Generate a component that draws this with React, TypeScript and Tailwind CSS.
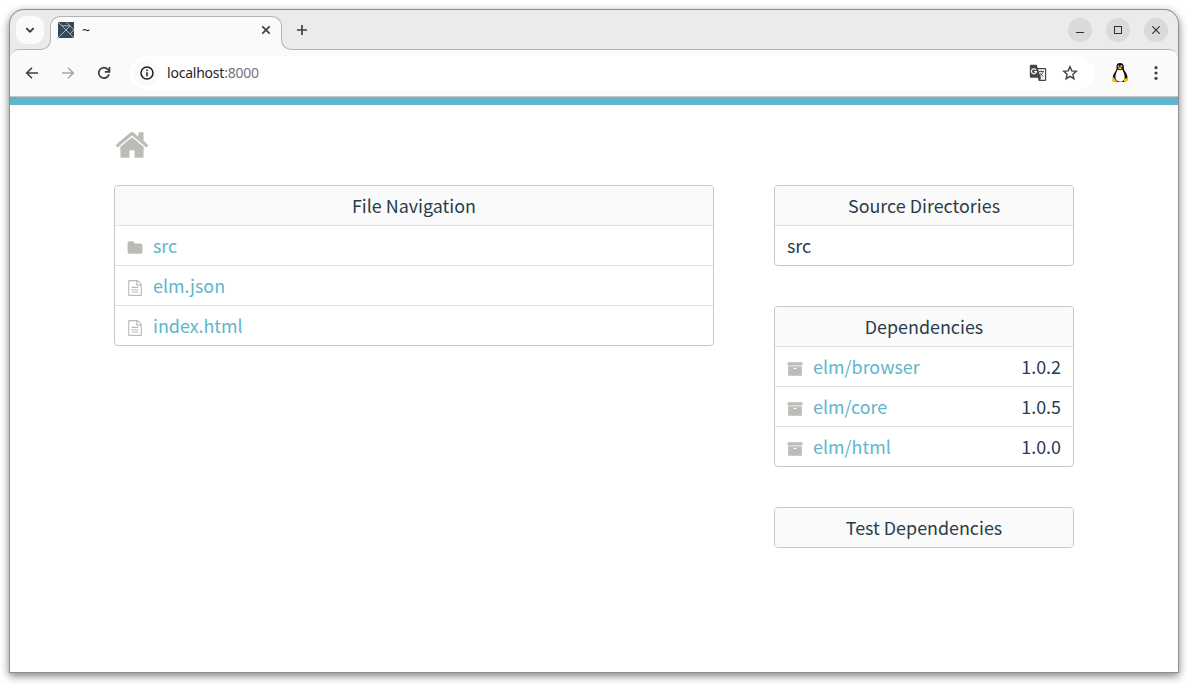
import React from 'react';

interface FileEntry {
  name: string;
  kind: 'folder' | 'file';
}

interface Dependency {
  name: string;
  version: string;
}

const files: FileEntry[] = [
  { name: 'src', kind: 'folder' },
  { name: 'elm.json', kind: 'file' },
  { name: 'index.html', kind: 'file' },
];

const dependencies: Dependency[] = [
  { name: 'elm/browser', version: '1.0.2' },
  { name: 'elm/core', version: '1.0.5' },
  { name: 'elm/html', version: '1.0.0' },
];

const iconPaths = {
  home: 'M1472 992v480q0 26-19 45t-45 19h-384v-384h-256v384h-384q-26 0-45-19t-19-45v-480q0-1 .5-3t.5-3l575-474 575 474q1 2 1 6zm223-69l-62 74q-8 9-21 11h-3q-13 0-21-7l-692-577-692 577q-12 8-24 7-13-2-21-11l-62-74q-8-10-7-23.5t11-21.5l719-599q32-26 76-26t76 26l244 204v-195q0-14 9-23t23-9h192q14 0 23 9t9 23v408l219 182q10 8 11 21.5t-7 23.5z',
  folder: 'M1728 608v704q0 92-66 158t-158 66h-1216q-92 0-158-66t-66-158v-960q0-92 66-158t158-66h320q92 0 158 66t66 158v32h672q92 0 158 66t66 158z',
  file: 'M1596 380q28 28 48 76t20 88v1152q0 40-28 68t-68 28h-1344q-40 0-68-28t-28-68v-1600q0-40 28-68t68-28h896q40 0 88 20t76 48zm-444-244v376h376q-10-29-22-41l-313-313q-12-12-41-22zm384 1528v-1024h-416q-40 0-68-28t-28-68v-416h-768v1536h1280zm-1024-864q0-14 9-23t23-9h704q14 0 23 9t9 23v64q0 14-9 23t-23 9h-704q-14 0-23-9t-9-23v-64zm736 224q14 0 23 9t9 23v64q0 14-9 23t-23 9h-704q-14 0-23-9t-9-23v-64q0-14 9-23t23-9h704zm0 256q14 0 23 9t9 23v64q0 14-9 23t-23 9h-704q-14 0-23-9t-9-23v-64q0-14 9-23t23-9h704z',
  archive: 'M1088 832q0-26-19-45t-45-19h-256q-26 0-45 19t-19 45 19 45 45 19h256q26 0 45-19t19-45zm576-192v960q0 26-19 45t-45 19h-1408q-26 0-45-19t-19-45v-960q0-26 19-45t45-19h1408q26 0 45 19t19 45zm64-448v256q0 26-19 45t-45 19h-1536q-26 0-45-19t-19-45v-256q0-26 19-45t45-19h1536q26 0 45 19t19 45z',
};

const Icon: React.FC<{ name: keyof typeof iconPaths; className: string }> = ({ name, className }) => (
  <svg viewBox="0 0 1792 1792" className={`fill-[#babdb6] ${className}`}>
    <path d={iconPaths[name]} />
  </svg>
);

const ElmLogo = () => (
  <svg viewBox="0 0 16 16" className="h-4 w-4">
    <rect width="16" height="16" fill="#34495e" />
    <path d="M0 0L16 16M0 16L12 4M3.800 3.800H12M8.200 0L16 7.800L12.200 11.800" fill="none" stroke="#c9cfd4" strokeWidth="0.8" />
  </svg>
);

const Penguin = () => (
  <svg viewBox="0 0 18 20" className="h-5 w-[18px]">
    <path d="M9 0C6.400 0 5.400 1.600 5.500 4c.1 2.300-.3 3.200-1.500 5C2.600 11 1.600 13 1.800 15.500L5 19h8.500l3-3.500c.3-2.500-.9-5-2.400-7C12.700 6.700 12.900 5.500 12.800 3.600 12.700 1.200 11.500 0 9 0z" fill="#111" />
    <path d="M6.600 6.600c1.200 1 3.200.9 4.500-.2 1.500 2.600 2.700 5 2.500 8.100-.2 2.500-1.500 4.200-4.400 4.200-2.800 0-4.600-1.800-4.800-4.400C4.200 11.300 5.800 9.100 6.600 6.600z" fill="#fff" />
    <circle cx="7.500" cy="3.200" r="1" fill="#aaa" />
    <circle cx="10.300" cy="3.200" r="1.100" fill="#aaa" />
    <path d="M6.500 5.100L8.800 3.900l2.700 1.200L9 6.800z" fill="#f5b301" />
    <path d="M2.400 14l3.700 4.400c-.4 1.300-2 1.100-5.100.1.500-1.300.4-3.200 1.400-4.500zM13.200 15c1.200 1.100 2.300.6 3-.4.2 1 1 1.500 1.400 2.200-1 1-2.300 2.200-3.800 2.400-1.200-.7-.9-2.700-.6-4.200z" fill="#f7b500" />
  </svg>
);

const TranslateIcon = () => (
  <svg viewBox="0 0 18 18" className="h-[18px] w-[18px]">
    <path d="M2 .8h5.700l1 3.200H16a1.200 1.200 0 0 1 1.200 1.200v10.600A1.200 1.200 0 0 1 16 17H9.800l-1-3.200H2A1.200 1.200 0 0 1 .8 12.600V2A1.200 1.200 0 0 1 2 .8z" fill="#474747" />
    <path d="M9.100 5.200H16v10.600h-4.800l1-2h-.4z" fill="#fafafa" />
    <path d="M7 5.900A2.500 2.500 0 1 0 7.400 7.700H5.200" fill="none" stroke="#fafafa" strokeWidth="1.200" />
    <path d="M10 7.500h5M12.500 6.500v1M14 7.500c-.5 2-1.700 3.400-3 4.500M11 8.800c.8 1.500 2 2.700 3.600 3.900" fill="none" stroke="#474747" strokeWidth="0.900" />
  </svg>
);

const TabStrip = () => (
  <div className="flex h-[39px] items-start pl-1.5">
    <div className="mt-1.5 flex h-7 w-7 items-center justify-center rounded-[10px] bg-[#fbfbfb]">
      <svg viewBox="0 0 10 10" className="h-2.5 w-2.5" fill="none" stroke="#303030" strokeWidth="1.7">
        <path d="M1.300 3.200L5 6.900l3.700-3.700" />
      </svg>
    </div>
    <div className="relative z-10 ml-1.5 mt-1.5 flex h-[34px] w-[232px] items-center rounded-t-[10px] border border-b-0 border-[#b3b3b3] bg-[#fafafa] pl-[7px] pr-2.5">
      {/* feet that flare out into the toolbar */}
      <span className="absolute -left-[11px] bottom-0 h-[11px] w-[11px] bg-[#fafafa] [clip-path:inset(0_0_0_1px)]">
        <span className="block h-full w-full rounded-br-[10px] border-b border-r border-[#b3b3b3] bg-[#ebebeb]" />
      </span>
      <span className="absolute -right-[11px] bottom-0 h-[11px] w-[11px] bg-[#fafafa]">
        <span className="block h-full w-full rounded-bl-[10px] border-b border-l border-[#b3b3b3] bg-[#ebebeb]" />
      </span>
      <div className="-mt-[7px] flex w-full items-center">
        <ElmLogo />
        <span className="ml-2 font-['Noto_Sans',sans-serif] text-[14px] leading-4 text-[#1f1f1f]">~</span>
        <svg viewBox="0 0 10 10" className="ml-auto h-2.5 w-2.5" stroke="#404040" strokeWidth="1.700">
          <path d="M1.300 1.300l7.400 7.400M8.700 1.300L1.300 8.700" />
        </svg>
      </div>
    </div>
    <svg viewBox="0 0 10 10" className="ml-[15px] mt-[15px] h-2.5 w-2.5" stroke="#404040" strokeWidth="1.700">
      <path d="M5 0v10M0 5h10" />
    </svg>
    <div className="ml-auto mr-2.5 mt-2 flex gap-3.5">
      <span className="flex h-6 w-6 items-center justify-center rounded-full bg-[#dadada]">
        <svg viewBox="0 0 8 8" className="h-2 w-2" stroke="#303030"><path d="M0 6.500h8" /></svg>
      </span>
      <span className="flex h-6 w-6 items-center justify-center rounded-full bg-[#dadada]">
        <span className="h-2 w-2 border border-[#303030]" />
      </span>
      <span className="flex h-6 w-6 items-center justify-center rounded-full bg-[#dadada]">
        <svg viewBox="0 0 8 8" className="h-2 w-2" stroke="#303030" strokeWidth="1.200"><path d="M.3.3l7.400 7.400M7.700.3L.3 7.700" /></svg>
      </span>
    </div>
  </div>
);

const Toolbar = () => (
  <div className="flex h-12 items-center rounded-t-[9px] border-b border-t border-b-[#c6c6c6] border-t-[#b3b3b3] bg-[#fafafa] pl-3.5 pr-3.5">
    <svg viewBox="0 0 16 16" className="h-4 w-4" fill="none" stroke="#404040" strokeWidth="1.600">
      <path d="M14 8H3M8 2.700L2.700 8 8 13.300" />
    </svg>
    <svg viewBox="0 0 16 16" className="ml-5 h-4 w-4" fill="none" stroke="#a6a6a6" strokeWidth="1.600">
      <path d="M2 8h11M8 2.700L13.300 8 8 13.300" />
    </svg>
    <svg viewBox="0 0 16 16" className="ml-5 h-4 w-4" fill="none" stroke="#404040" strokeWidth="1.700">
      <path d="M13 9.200A5.200 5.200 0 1 1 11.900 4.500L13.200 6M13.500 2v4.800H8.800" />
    </svg>
    <div className="ml-[18px] flex h-[34px] w-[964px] items-center rounded-full bg-white pl-1 pr-4">
      <span className="flex h-[26px] w-[26px] items-center justify-center rounded-full bg-[#fafafa]">
        <svg viewBox="0 0 14 14" className="h-3.5 w-3.5" fill="none" stroke="#1f1f1f" strokeWidth="1.500">
          <circle cx="7" cy="7" r="6" />
          <path d="M7 6.200v4M7 3.500v1.500" />
        </svg>
      </span>
      <span className="ml-[7px] font-['Noto_Sans',sans-serif] text-[14px] leading-5 tracking-[-0.22px] text-[#1f1f1f]">
        localhost<span className="text-[#757575]">:8000</span>
      </span>
      <span className="ml-auto flex items-center gap-[15px]">
        <TranslateIcon />
        <svg viewBox="0 0 16 16" className="h-4 w-4" fill="none" stroke="#404040" strokeWidth="1.400">
          <path d="M8 1.800l1.800 4.100 4.500.4-3.400 3 1 4.400L8 11.400l-3.900 2.300 1-4.400-3.400-3 4.500-.4z" />
        </svg>
      </span>
    </div>
    <div className="ml-[17px]">
      <Penguin />
    </div>
    <svg viewBox="0 0 16 16" className="ml-auto h-4 w-4" fill="#404040">
      <circle cx="8" cy="2.700" r="1.600" />
      <circle cx="8" cy="8" r="1.600" />
      <circle cx="8" cy="13.300" r="1.600" />
    </svg>
  </div>
);

const Box: React.FC<{ title: string; children?: React.ReactNode }> = ({ title, children }) => (
  <div className="overflow-hidden rounded border border-[#c7c7c7]">
    <div className="h-[39px] bg-[#fafafa] text-center leading-[39px]">{title}</div>
    {children}
  </div>
);

const Row: React.FC<{ children: React.ReactNode }> = ({ children }) => (
  <div className="flex h-10 items-center border-t border-[#e1e1e1] px-3 leading-[38px]">{children}</div>
);

const App: React.FC = () => {
  return (
    <div className="h-[685px] w-[1188px] overflow-hidden bg-white px-2.5 pt-2.5">
      <div className="h-[662px] w-[1168px] rounded-t-[14px] bg-[#ebebeb] shadow-[0_0_0_1px_#8f8f8f,0_3px_9px_1px_rgba(0,0,0,0.5)]">
        <TabStrip />
        <Toolbar />
        <div className="h-[575px] border-t-8 border-[#60b5cc] bg-white px-[104px] font-['Noto_Sans_CJK_SC',sans-serif] text-[17.9px] text-[#293c4b]">
          <div className="flex h-20 items-center">
            <Icon name="home" className="h-9 w-9" />
          </div>
          <div className="flex items-start justify-between">
            <div className="w-[600px]">
              <Box title="File Navigation">
                {files.map(file => (
                  <Row key={file.name}>
                    <Icon name={file.kind} className="mt-1 h-4 w-4" />
                    <a className="-mt-px ml-2.5 text-[#60b5cc]">{file.name}</a>
                  </Row>
                ))}
              </Box>
            </div>
            <div className="flex w-[300px] flex-col gap-10">
              <Box title="Source Directories">
                <Row>
                  <span className="-mt-px">src</span>
                </Row>
              </Box>
              <Box title="Dependencies">
                {dependencies.map(dep => (
                  <Row key={dep.name}>
                    <Icon name="archive" className="mt-1 h-4 w-4" />
                    <a className="-mt-px ml-2.5 text-[#60b5cc]">{dep.name}</a>
                    <span className="-mt-px ml-auto">{dep.version}</span>
                  </Row>
                ))}
              </Box>
              <Box title="Test Dependencies" />
            </div>
          </div>
        </div>
      </div>
    </div>
  );
};

export default App;
